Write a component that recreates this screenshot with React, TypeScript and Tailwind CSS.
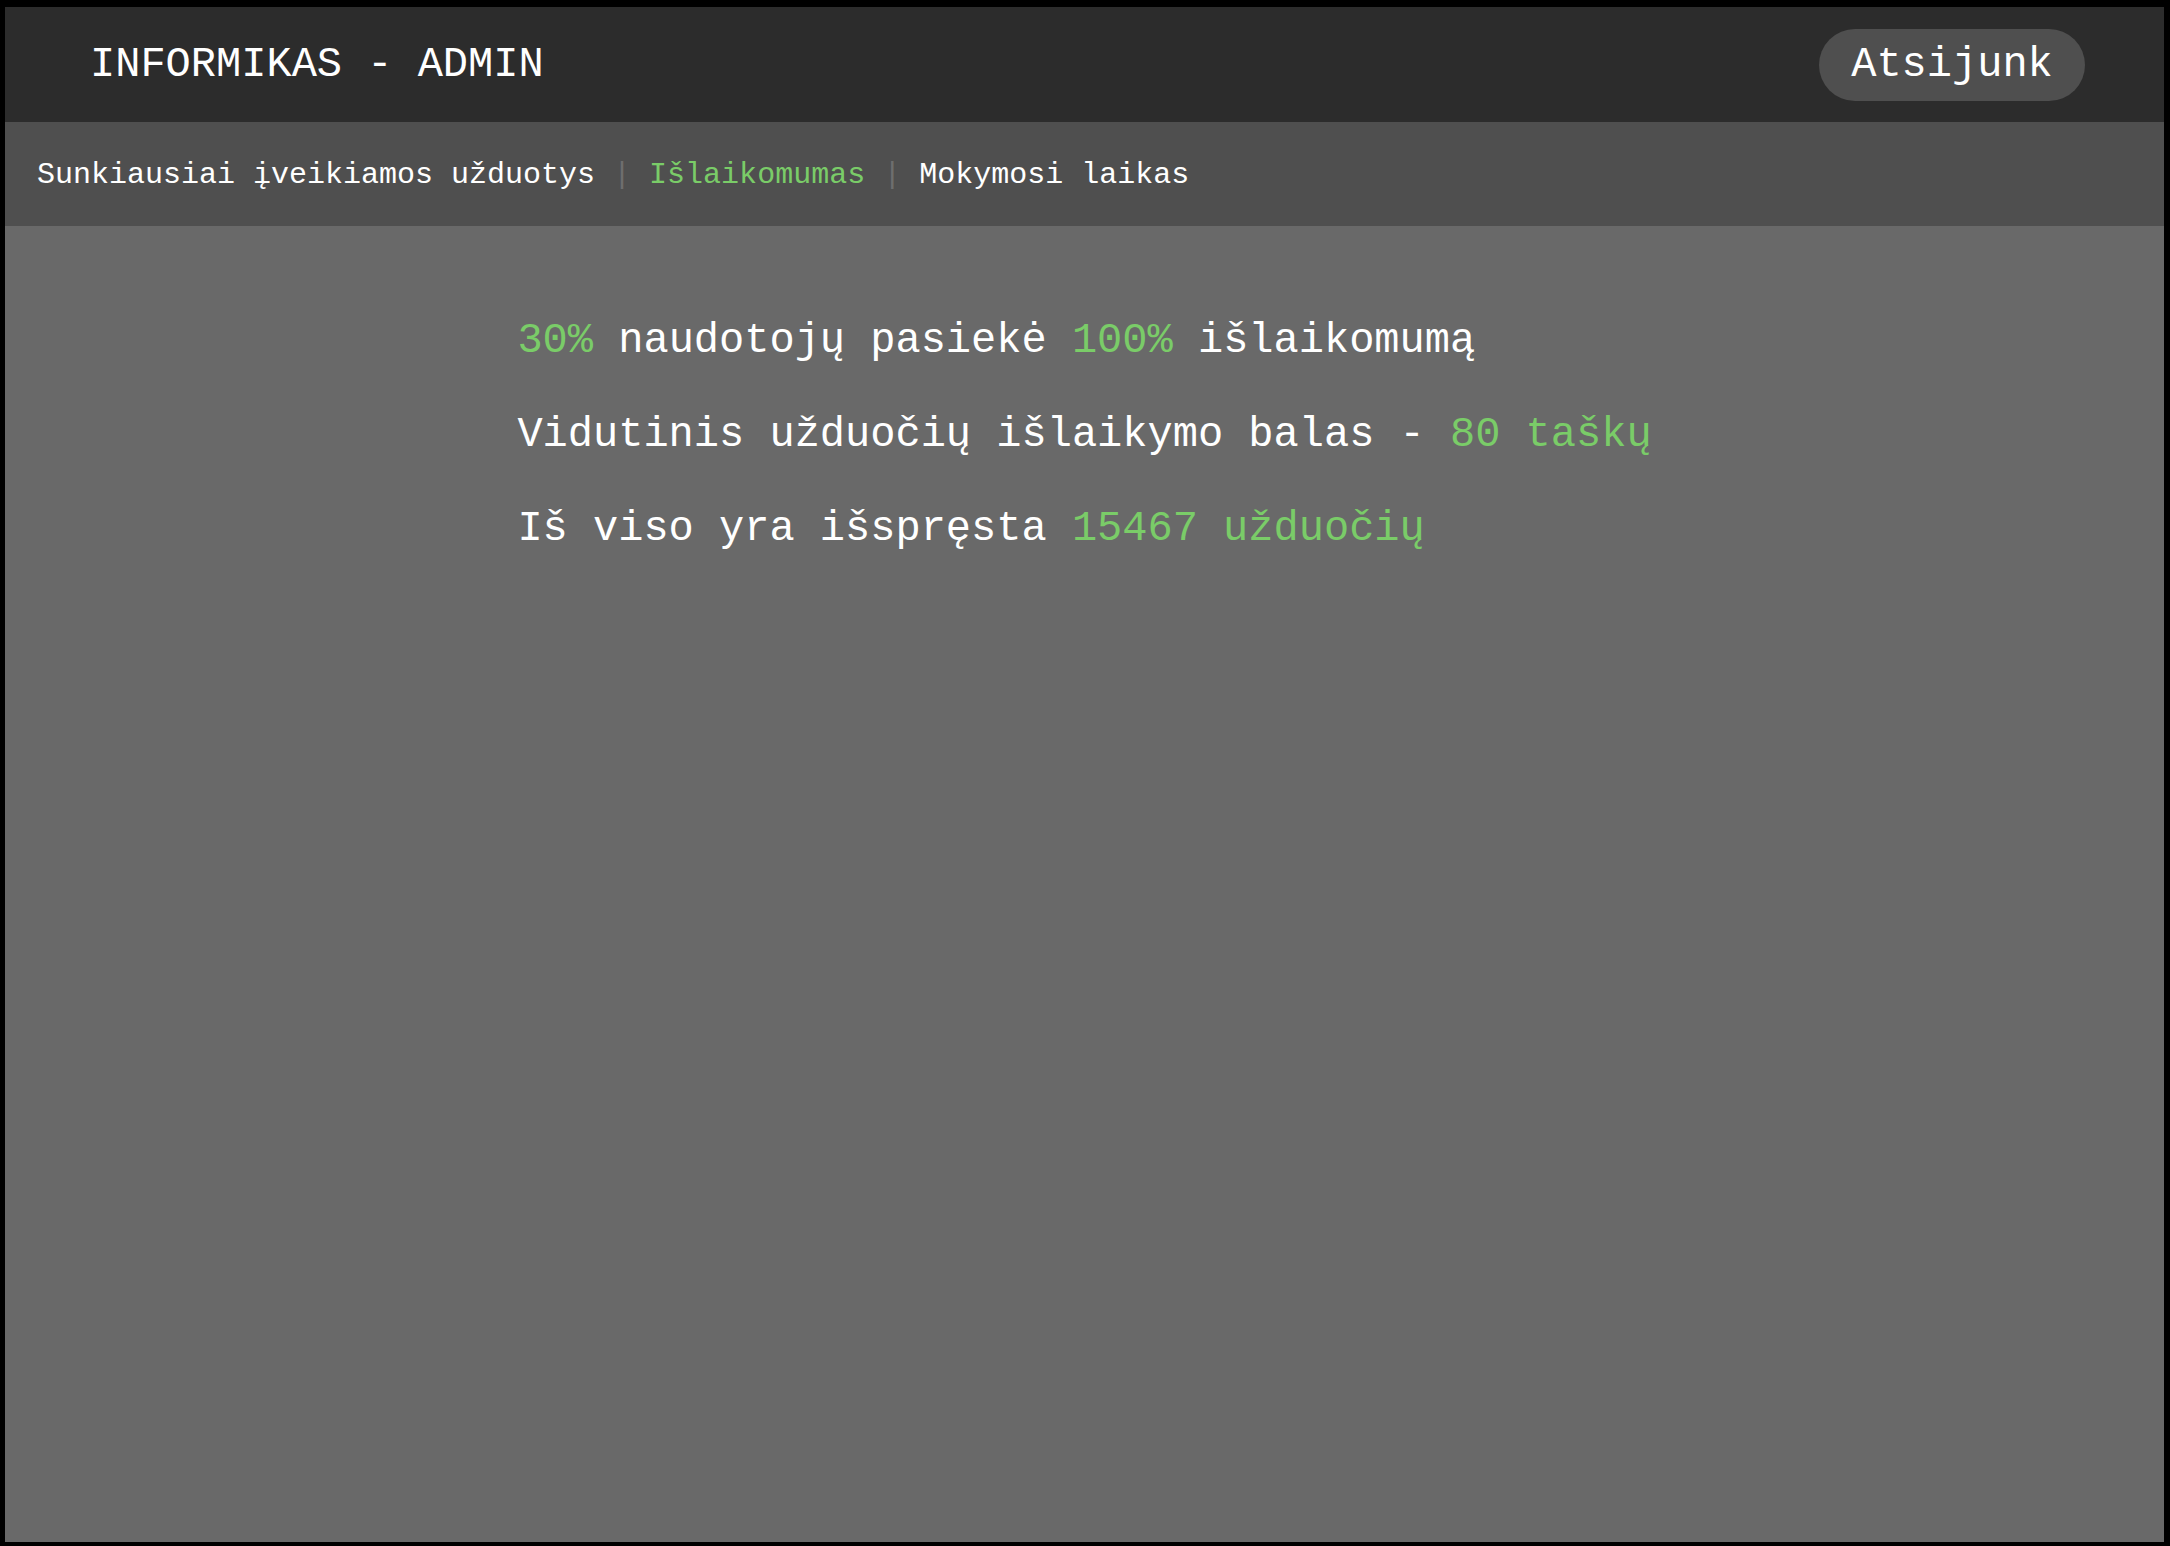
export default function App() {
  const mono = { fontFamily: '"Liberation Mono", "Courier New", monospace' };
  const green = "text-[#7acc68]";
  return (
    <div className="min-h-[1546px] w-full bg-black pt-[7px] pl-[5px] pr-[6px] pb-[4px] flex" style={mono}>
      <div className="flex-1 flex flex-col bg-[#696969]">
        <header className="h-[115px] bg-[#2c2c2c] flex items-center justify-between pl-[85px] pr-[79px]">
          <h1 className="text-[42px] text-white leading-none">INFORMIKAS - ADMIN</h1>
          <button className="h-[72px] w-[266px] rounded-full bg-[#4f4f4f] text-white text-[42px] leading-none">
            Atsijunk
          </button>
        </header>
        <nav className="h-[104px] bg-[#4f4f4f] flex items-center pl-[32px] pt-[2px] text-[30px] text-white whitespace-pre">
          <span>Sunkiausiai įveikiamos užduotys</span>
          <span className="text-[#6e6e6e]"> | </span>
          <span className={green}>Išlaikomumas</span>
          <span className="text-[#6e6e6e]"> | </span>
          <span>Mokymosi laikas</span>
        </nav>
        <main className="flex-1 pt-[90px]">
          <div className="mx-auto w-fit flex flex-col gap-[44px] text-[42px] leading-[50px] text-white whitespace-pre">
            <p>
              <span className={green}>30%</span> naudotojų pasiekė <span className={green}>100%</span> išlaikomumą
            </p>
            <p>
              Vidutinis užduočių išlaikymo balas - <span className={green}>80 taškų</span>
            </p>
            <p>
              Iš viso yra išspręsta <span className={green}>15467 užduočių</span>
            </p>
          </div>
        </main>
      </div>
    </div>
  );
}
